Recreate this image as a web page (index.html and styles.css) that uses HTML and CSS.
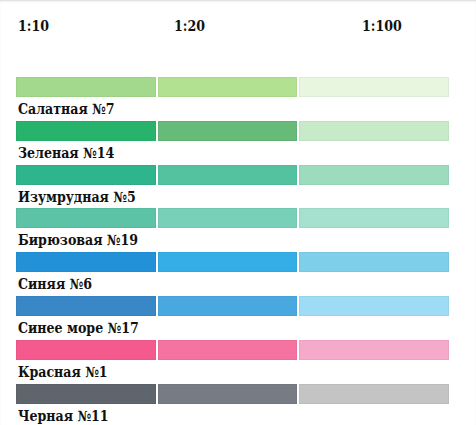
FILE: index.html
```html
<!DOCTYPE html>
<html lang="ru">
<head>
  <meta charset="UTF-8">
  <meta name="viewport" content="width=device-width, initial-scale=1.0">
  <title>Палитра</title>
  <link rel="stylesheet" href="styles.css">
</head>
<body>
  <div class="palette">
    <!-- Scale header -->
    <div class="scale-row">
      <div class="scale scale-10">1:10</div>
      <div class="scale scale-20">1:20</div>
      <div class="scale scale-100">1:100</div>
    </div>

    <div class="swatches salad">
      <div class="swatch"></div><div class="swatch"></div><div class="swatch"></div>
    </div>
    <div class="name">Салатная №7</div>

    <div class="swatches green">
      <div class="swatch"></div><div class="swatch"></div><div class="swatch"></div>
    </div>
    <div class="name">Зеленая №14</div>

    <div class="swatches emerald">
      <div class="swatch"></div><div class="swatch"></div><div class="swatch"></div>
    </div>
    <div class="name">Изумрудная №5</div>

    <div class="swatches turquoise">
      <div class="swatch"></div><div class="swatch"></div><div class="swatch"></div>
    </div>
    <div class="name">Бирюзовая №19</div>

    <div class="swatches blue">
      <div class="swatch"></div><div class="swatch"></div><div class="swatch"></div>
    </div>
    <div class="name">Синяя №6</div>

    <div class="swatches sea">
      <div class="swatch"></div><div class="swatch"></div><div class="swatch"></div>
    </div>
    <div class="name">Синее море №17</div>

    <div class="swatches red">
      <div class="swatch"></div><div class="swatch"></div><div class="swatch"></div>
    </div>
    <div class="name">Красная №1</div>

    <div class="swatches black">
      <div class="swatch"></div><div class="swatch"></div><div class="swatch"></div>
    </div>
    <div class="name">Черная №11</div>
  </div>
</body>
</html>
```

FILE: styles.css
```css
/* =====================
   Global
   ===================== */
body {
  margin: 0;
  background: #FFFFFF;
  color: #111;
  font-family: "DejaVu Serif Condensed", "DejaVu Serif", "Liberation Serif", serif;
  font-weight: 700;
}

.palette {
  border-top: 1px solid #E2E2E2;
  box-shadow: inset 0 1px 2px rgba(0, 0, 0, 0.06);
  padding: 0 0 0 16px;
  height: 424px;
  overflow: hidden;
}

/* =====================
   Scale header
   ===================== */
.scale-row {
  display: grid;
  grid-template-columns: 142px 141px 150px;
  height: 76px;
  font-size: 14px;
  line-height: 16px;
  padding-top: 17px;
  box-sizing: border-box;
}

.scale-10 { padding-left: 2px; }
.scale-20 { padding-left: 16px; }
.scale-100 { padding-left: 63px; }

/* =====================
   Swatch rows
   ===================== */
.swatches {
  display: grid;
  grid-template-columns: 140px 139px 150px;
  gap: 2px;
  height: 20px;
}

.swatch {
  box-shadow: inset 0 0 0 1px rgba(0, 0, 0, 0.04);
}

.name {
  height: 23.8px;
  box-sizing: border-box;
  padding: 4px 0 0 2px;
  font-size: 14px;
  line-height: 16px;
}

.salad .swatch:nth-child(1) { background: #A3D98C; }
.salad .swatch:nth-child(2) { background: #B2E192; }
.salad .swatch:nth-child(3) { background: #E8F5DF; }

.green .swatch:nth-child(1) { background: #27B36C; }
.green .swatch:nth-child(2) { background: #66BB78; }
.green .swatch:nth-child(3) { background: #C7EAC9; }

.emerald .swatch:nth-child(1) { background: #2EB58E; }
.emerald .swatch:nth-child(2) { background: #55C29F; }
.emerald .swatch:nth-child(3) { background: #9CDBBE; }

.turquoise .swatch:nth-child(1) { background: #5CC3A6; }
.turquoise .swatch:nth-child(2) { background: #78D0B9; }
.turquoise .swatch:nth-child(3) { background: #A6E0CE; }

.blue .swatch:nth-child(1) { background: #2291D8; }
.blue .swatch:nth-child(2) { background: #35AEE8; }
.blue .swatch:nth-child(3) { background: #7ED0EA; }

.sea .swatch:nth-child(1) { background: #3A87C8; }
.sea .swatch:nth-child(2) { background: #4AA8E0; }
.sea .swatch:nth-child(3) { background: #9EDCF5; }

.red .swatch:nth-child(1) { background: #F45A8D; }
.red .swatch:nth-child(2) { background: #F473A1; }
.red .swatch:nth-child(3) { background: #F5A9CB; }

.black .swatch:nth-child(1) { background: #5F656C; }
.black .swatch:nth-child(2) { background: #777B83; }
.black .swatch:nth-child(3) { background: #C4C4C4; }
```
